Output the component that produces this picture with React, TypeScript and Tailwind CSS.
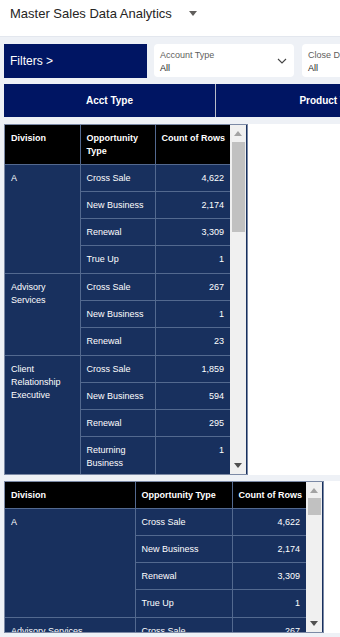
import React from 'react';

type Row = { division?: string; span?: number; type: string; count: string; last?: boolean };

const rows: Row[] = [
  { division: 'A', span: 4, type: 'Cross Sale', count: '4,622' },
  { type: 'New Business', count: '2,174' },
  { type: 'Renewal', count: '3,309' },
  { type: 'True Up', count: '1', last: true },
  { division: 'Advisory Services', span: 3, type: 'Cross Sale', count: '267' },
  { type: 'New Business', count: '1' },
  { type: 'Renewal', count: '23', last: true },
  { division: 'Client Relationship Executive', span: 4, type: 'Cross Sale', count: '1,859' },
  { type: 'New Business', count: '594' },
  { type: 'Renewal', count: '295' },
  { type: 'Returning Business', count: '1', last: true },
];

function Scrollbar({ thumbTop, thumbHeight }: { thumbTop: number; thumbHeight: number }) {
  return (
    <div className="relative w-[16px] shrink-0 bg-[#f0f0f0]">
      {/* up arrow */}
      <svg className="absolute left-[4px] top-[6px]" width="8" height="5" viewBox="0 0 8 5">
        <path d="M0 5 L4 0 L8 5 Z" fill="#a3a3a3" />
      </svg>
      <div
        className="absolute left-[2px] w-[13px] bg-[#c1c1c1]"
        style={{ top: thumbTop, height: thumbHeight }}
      />
      {/* down arrow */}
      <svg className="absolute left-[4px] bottom-[6px]" width="8" height="5" viewBox="0 0 8 5">
        <path d="M0 0 L8 0 L4 5 Z" fill="#505050" />
      </svg>
    </div>
  );
}

function DataTable({
  widths,
  wrapHeader,
  thumbTop,
  thumbHeight,
  headerHeight,
}: {
  widths: number[];
  wrapHeader: boolean;
  thumbTop: number;
  thumbHeight: number;
  headerHeight: number;
}) {
  const total = widths.reduce((a, b) => a + b, 0);
  const th = 'bg-black text-white font-bold text-left align-top px-[6px] pt-[7px] leading-[13px] border-r border-b border-[#53698f]';
  const td = 'bg-[#18305e] text-white px-[6px] border-b border-r border-[#53698f] leading-[13px]';
  return (
    <div className="flex h-full border border-[#7b89a5] bg-[#18305e]">
      <div className="overflow-hidden" style={{ width: total }}>
        <table className="table-fixed border-collapse text-[9px]" style={{ width: total }}>
          <colgroup>
            {widths.map((w, i) => (
              <col key={i} style={{ width: w }} />
            ))}
          </colgroup>
          <thead>
            <tr style={{ height: headerHeight }}>
              <th className={th}>Division</th>
              <th className={`${th} ${wrapHeader ? '' : 'whitespace-nowrap'}`}>Opportunity Type</th>
              <th className={`${th} !text-right whitespace-nowrap border-r-0`}>Count of Rows</th>
            </tr>
          </thead>
          <tbody>
            {rows.map((r, i) => {
              const pad = r.last ? 'pt-[7px] pb-[7px]' : 'pt-[7px] pb-[6px]';
              return (
                <tr key={i}>
                  {r.division && (
                    <td rowSpan={r.span} className={`${td} align-top pt-[7px]`}>
                      {r.division}
                    </td>
                  )}
                  <td className={`${td} align-top ${pad}`}>{r.type}</td>
                  <td className={`${td} align-top ${pad} text-right border-r-0`}>{r.count}</td>
                </tr>
              );
            })}
          </tbody>
        </table>
      </div>
      <Scrollbar thumbTop={thumbTop} thumbHeight={thumbHeight} />
    </div>
  );
}

function Dropdown({ label }: { label: string }) {
  return (
    <div className="relative w-[140px] shrink-0 h-[33px] bg-white rounded-[4px] pl-[6px] pt-[5px] text-[9px] leading-[12px]">
      <div className="text-[#605e5c] whitespace-nowrap">{label}</div>
      <div className="text-[#252423] mt-[1px]">All</div>
      <svg className="absolute right-[7px] top-[14px]" width="10" height="6" viewBox="0 0 10 6">
        <path d="M1 1 L5 5 L9 1" fill="none" stroke="#444" strokeWidth="1.1" />
      </svg>
    </div>
  );
}

export default function App() {
  return (
    <div className="w-[340px] h-[637px] overflow-hidden bg-[#eef1f6] font-['Liberation_Sans',Arial,sans-serif]">
      <header className="h-[37px] bg-white border-b border-[#e3e7ee] pl-[10px] pt-[4px] flex items-start">
        <span className="text-[13px] leading-[19px] text-[#252423]">Master Sales Data Analytics</span>
        <svg className="ml-[17px] mt-[7px]" width="8" height="5" viewBox="0 0 8 5">
          <path d="M0 0 L8 0 L4 5 Z" fill="#605e5c" />
        </svg>
      </header>

      <div className="flex mt-[7px] pl-[4px] gap-[7px]">
        <div className="w-[143px] shrink-0 h-[34px] bg-[#001563] text-white text-[12px] flex items-center pl-[6px]">
          Filters &gt;
        </div>
        <Dropdown label="Account Type" />
        <div className="ml-[1px]">
          <Dropdown label="Close Date" />
        </div>
      </div>

      <div className="flex mt-[6px] ml-[4px] h-[33px] bg-[#001563] text-white text-[10px] font-bold">
        <div className="w-[212px] shrink-0 flex items-center justify-center border-r border-[#b8bcc8]">Acct Type</div>
        <div className="w-[230px] shrink-0 flex items-center justify-center whitespace-nowrap">Product Type</div>
      </div>

      <div className="mt-[7px] ml-[4px] h-[351px] bg-white">
        <div className="w-[244px] h-full">
          <DataTable widths={[75, 75, 75]} wrapHeader thumbTop={17} thumbHeight={90} headerHeight={39} />
        </div>
      </div>

      <div className="mt-[6px] ml-[4px] h-[152px] bg-white">
        <div className="w-[320px] h-full">
          <DataTable widths={[130, 97, 74]} wrapHeader={false} thumbTop={16} thumbHeight={17} headerHeight={26} />
        </div>
      </div>
    </div>
  );
}
